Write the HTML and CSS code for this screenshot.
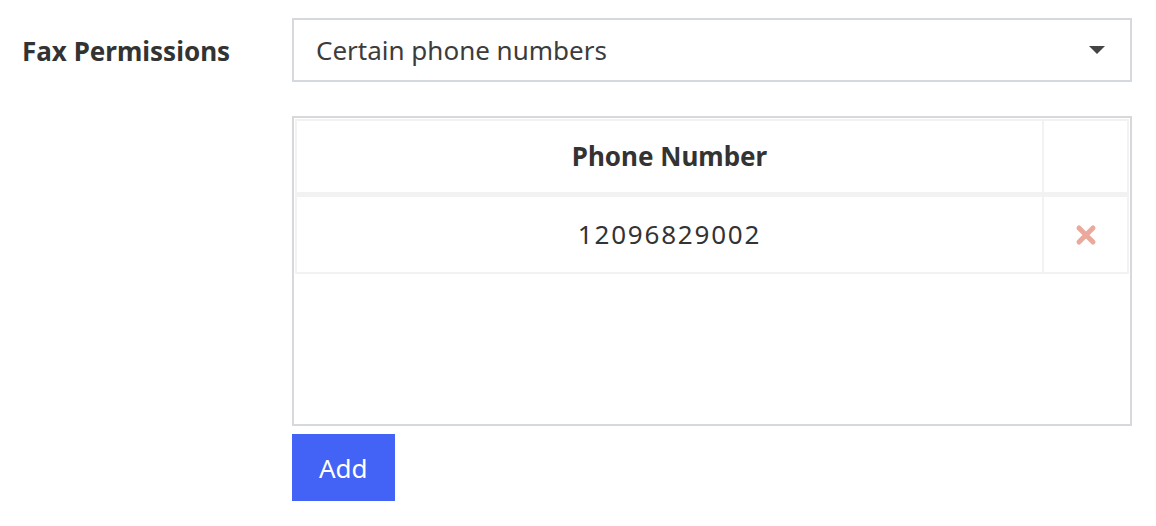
FILE: index.html
```html
<!DOCTYPE html>
<html lang="en">
<head>
    <meta charset="UTF-8">
    <meta name="viewport" content="width=device-width, initial-scale=1.0">
    <title>Fax Permissions</title>
    <link rel="stylesheet" href="styles.css">
</head>
<body>
    <div class="form-row">
        <label class="field-label" for="faxPermissions">Fax Permissions</label>
        <div class="field">
            <div class="select" id="faxPermissions">
                <span>Certain phone numbers</span>
                <svg class="caret" width="16" height="8" viewBox="0 0 16 8"><polygon points="0,0 16,0 8,8" fill="#444"/></svg>
            </div>

            <div class="numbers">
                <table>
                    <thead>
                        <tr>
                            <th class="col-number">Phone Number</th>
                            <th class="col-action"></th>
                        </tr>
                    </thead>
                    <tbody>
                        <tr>
                            <td class="col-number phone">12096829002</td>
                            <td class="col-action">
                                <svg class="remove" width="22" height="22" viewBox="0 0 22 22">
                                    <path d="M4 4 L18 18 M18 4 L4 18" stroke="#eba99c" stroke-width="5" stroke-linecap="round"/>
                                </svg>
                            </td>
                        </tr>
                    </tbody>
                </table>
            </div>

            <button class="add-btn">Add</button>
        </div>
    </div>
</body>
</html>
```

FILE: styles.css
```css
body {
    font-family: 'Noto Sans', 'Open Sans', sans-serif;
    color: #333;
    background-color: #fff;
    margin: 0;
    padding: 0;
}
.form-row {
    display: flex;
    align-items: flex-start;
    padding: 18px 0 0 22px;
}
.field-label {
    width: 270px;
    height: 64px;
    display: flex;
    align-items: center;
    padding-top: 2px;
    box-sizing: border-box;
    font-size: 26px;
    font-weight: bold;
    color: #333;
}
.field {
    width: 840px;
}
.select {
    box-sizing: border-box;
    height: 64px;
    border: 2px solid #d5d8dc;
    display: flex;
    align-items: center;
    justify-content: space-between;
    padding: 0 25px 0 22px;
    font-size: 26px;
    color: #3c3c3c;
}
.caret {
    display: block;
}
.numbers {
    box-sizing: border-box;
    height: 310px;
    margin-top: 34px;
    border: 2px solid #d5d8dc;
    padding: 1px;
}
table {
    width: 100%;
    border-spacing: 0;
    border-top: 2px solid #f2f2f2;
    border-left: 2px solid #f2f2f2;
}
th, td {
    border-right: 2px solid #f2f2f2;
    border-bottom: 2px solid #f2f2f2;
    text-align: center;
    font-size: 26px;
    line-height: 33px;
    padding: 0;
}
th {
    font-weight: bold;
    height: 71px;
    border-bottom-width: 5px;
}
td {
    height: 75px;
}
.phone {
    letter-spacing: 1.8px;
}
.col-action {
    width: 83px;
}
.remove {
    display: block;
    margin: 0 auto;
}
.add-btn {
    margin-top: 8px;
    height: 67px;
    padding: 0 27px;
    border: none;
    border-radius: 0;
    background-color: #4263f5;
    color: #fff;
    font-family: inherit;
    font-size: 26px;
    cursor: pointer;
}
```
